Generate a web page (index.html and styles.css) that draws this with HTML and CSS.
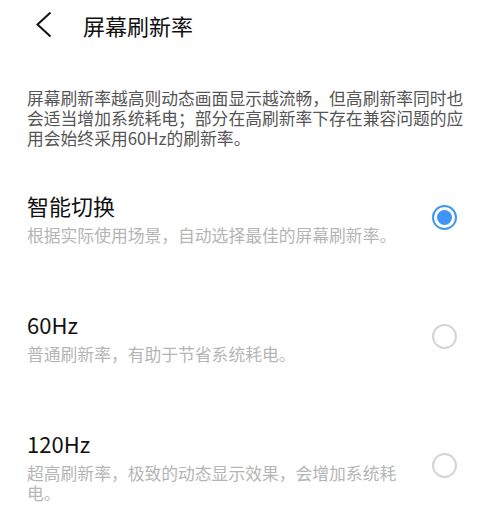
FILE: index.html
```html
<!DOCTYPE html>
<html>
<head>
    <meta charset="utf-8">
    <meta name="viewport" content="width=device-width">
    <title>屏幕刷新率</title>
    <link rel="stylesheet" href="styles.css">
</head>
<body>
    <div class="header">
        <span class="back">
            <svg width="16" height="28" viewBox="0 0 16 28">
                <path d="M14.5 1.5 L1.5 13.5 L14.5 25.5" fill="none" stroke="#111" stroke-width="2"/>
            </svg>
        </span>
        <span class="title">屏幕刷新率</span>
    </div>

    <p class="desc">屏幕刷新率越高则动态画面显示越流畅，但高刷新率同时也会适当增加系统耗电；部分在高刷新率下存在兼容问题的应用会始终采用60Hz的刷新率。</p>

    <div class="options">
        <div class="option">
            <div class="option-text">
                <div class="option-title">智能切换</div>
                <div class="option-sub">根据实际使用场景，自动选择最佳的屏幕刷新率。</div>
            </div>
            <span class="radio checked"></span>
        </div>
        <div class="option">
            <div class="option-text">
                <div class="option-title">60Hz</div>
                <div class="option-sub">普通刷新率，有助于节省系统耗电。</div>
            </div>
            <span class="radio"></span>
        </div>
        <div class="option">
            <div class="option-text">
                <div class="option-title">120Hz</div>
                <div class="option-sub">超高刷新率，极致的动态显示效果，会增加系统耗电。</div>
            </div>
            <span class="radio"></span>
        </div>
    </div>
</body>
</html>
```

FILE: styles.css
```css
body {
    font-family: "Noto Sans CJK SC", "Noto Sans", sans-serif;
    background-color: #fff;
    margin: 0;
    padding: 0;
    color: #111;
}

.header {
    display: flex;
    align-items: center;
    height: 50px;
    padding-left: 36px;
}

.back {
    display: flex;
    width: 16px;
    height: 28px;
    margin-right: 31px;
}

.title {
    font-size: 22px;
    line-height: 50px;
}

.desc {
    margin: 38px 0 0;
    padding: 0 27px;
    font-size: 16.8px;
    line-height: 20px;
    color: #555;
}

.options {
    margin-top: 10px;
}

.option {
    display: flex;
    align-items: center;
    padding: 32px 43px 32px 27px;
}

.option-text {
    flex: 1;
    margin-right: 27px;
}

.option-title {
    font-size: 22px;
    line-height: 30px;
}

.option-sub {
    margin-top: 5px;
    font-size: 16.8px;
    line-height: 20px;
    color: #b5b5b5;
}

.radio {
    box-sizing: border-box;
    width: 25px;
    height: 25px;
    border: 2px solid #d4d4d4;
    border-radius: 50%;
    display: flex;
    align-items: center;
    justify-content: center;
}

.radio.checked {
    border-color: #3f95f6;
}

.radio.checked::after {
    content: "";
    width: 15px;
    height: 15px;
    border-radius: 50%;
    background-color: #3f95f6;
}
```
